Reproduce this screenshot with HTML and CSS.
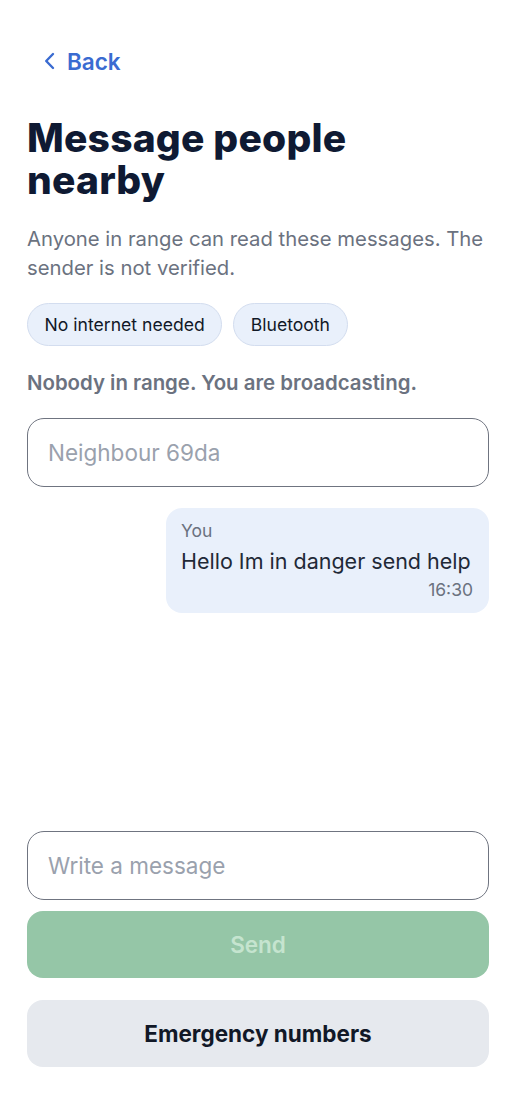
FILE: index.html
```html
<!DOCTYPE html>
<html lang="en">
<head>
<meta charset="utf-8">
<link rel="stylesheet" href="styles.css">
</head>
<body>
<div class="page">
  <a class="back" href="#">
    <svg class="chev" width="11" height="18" viewBox="0 0 11 18"><path d="M9 2 L2.2 9 L9 16" fill="none" stroke="currentColor" stroke-width="2.4" stroke-linecap="round" stroke-linejoin="round"/></svg>
    <span>Back</span>
  </a>
  <h1 class="title">Message people nearby</h1>
  <p class="lead">Anyone in range can read these messages. The sender is not verified.</p>
  <div class="chips">
    <span class="chip">No internet needed</span>
    <span class="chip">Bluetooth</span>
  </div>
  <p class="status">Nobody in range. You are broadcasting.</p>
  <div class="field">Neighbour 69da</div>
  <div class="messages">
    <div class="bubble">
      <div class="who">You</div>
      <div class="text">Hello Im in danger send help</div>
      <div class="time">16:30</div>
    </div>
  </div>
  <div class="bottom">
    <div class="field">Write a message</div>
    <button class="send">Send</button>
    <button class="emergency">Emergency numbers</button>
  </div>
</div>
</body>
</html>
```
FILE: styles.css
```css
* { box-sizing: border-box; }
html, body { margin: 0; padding: 0; background: #fff; }
body { font-family: Inter, "Noto Sans", sans-serif; color: #111827; }
.page {
  width: 516px;
  height: 1100px;
  padding: 47px 27px 33px;
  display: flex;
  flex-direction: column;
}
.back {
  display: flex;
  align-items: center;
  gap: 12px;
  color: #3a6bd1;
  text-decoration: none;
  font-size: 22.5px;
  font-weight: 600;
  padding-left: 17px;
  height: 28px;
}
.chev { display: block; }
.title {
  margin: 42px 0 0;
  max-width: 360px;
  font-size: 39px;
  line-height: 42px;
  font-weight: 800;
  letter-spacing: 0.2px;
  color: #0f1a33;
}
.lead {
  margin: 23px 0 0;
  font-size: 20.3px;
  line-height: 29px;
  color: #6b7280;
}
.chips {
  display: flex;
  gap: 11px;
  margin-top: 21px;
}
.chip {
  height: 43px;
  display: flex;
  align-items: center;
  padding: 0 16.5px;
  border-radius: 22px;
  background: #e9f0fb;
  border: 1px solid #d3ddef;
  font-size: 17.6px;
  color: #111827;
}
.status {
  margin: 24px 0 0;
  font-size: 20.4px;
  font-weight: 600;
  color: #6b7280;
  line-height: 26px;
}
.field {
  height: 69px;
  border: 1.3px solid #6f7480;
  border-radius: 17px;
  display: flex;
  align-items: center;
  padding: 0 20px;
  font-size: 22.5px;
  color: #9aa1ad;
}
.status + .field { margin-top: 22px; }
.messages {
  flex: 1;
  display: flex;
  flex-direction: column;
  align-items: flex-end;
  padding-top: 21px;
}
.bubble {
  width: 323px;
  background: #e9f0fb;
  border-radius: 16px;
  padding: 12px 16px 10px 15px;
}
.who { font-size: 17.5px; color: #6b7280; line-height: 22px; }
.text { font-size: 21.5px; line-height: 32px; color: #1f2937; margin-top: 3px; }
.time { font-size: 17.5px; color: #6b7280; text-align: right; line-height: 26px; }
.bottom { display: flex; flex-direction: column; }
button {
  font-family: inherit;
  border: none;
  height: 67px;
  border-radius: 16px;
  font-size: 22.5px;
  width: 100%;
}
.send {
  margin-top: 11px;
  background: #95c6a7;
  color: #c5e4cf;
  font-weight: 600;
}
.emergency {
  margin-top: 22px;
  background: #e6e9ee;
  color: #111827;
  font-weight: 700;
}
```
